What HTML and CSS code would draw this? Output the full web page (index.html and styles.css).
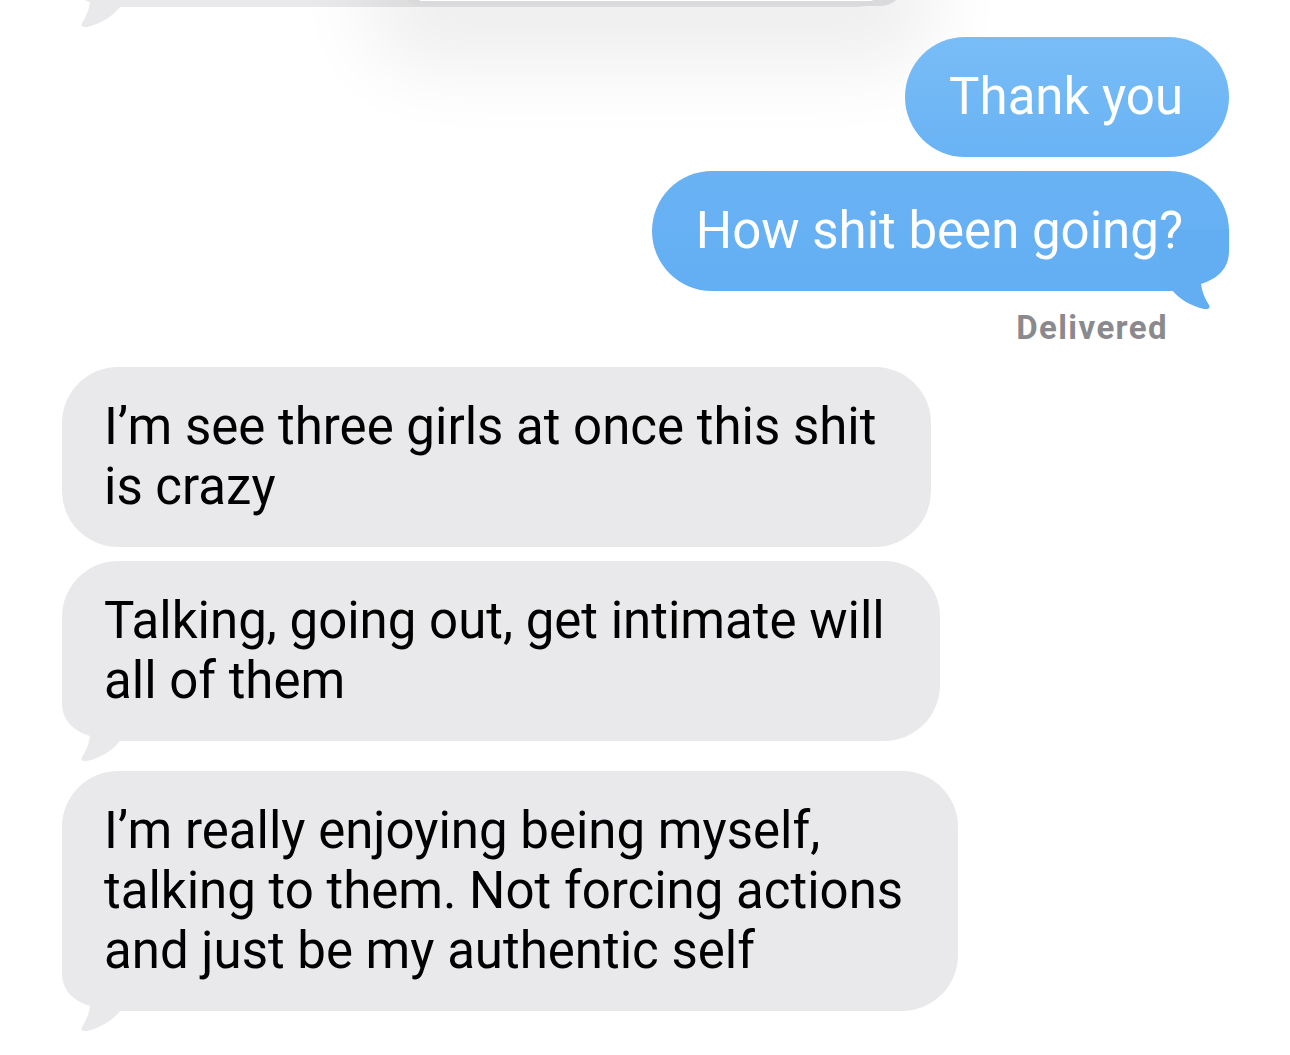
FILE: index.html
```html
<!DOCTYPE html>
<html lang="en">
<head>
<meta charset="utf-8">
<title>Messages</title>
<link rel="stylesheet" href="styles.css">
</head>
<body>
<main class="thread">
  <div class="bubble in peek-bubble">
    <svg class="tail tail-in" viewBox="0 0 70 80" aria-hidden="true"><path d="M0,0 L0,22 C0,40 12,50 28,55 C27,63 24,70 20,76 C18,79 21,81 25,80 C38,77 50,70 58,60 L70,60 L70,0 Z"/></svg>
    <div class="peek-card"><div class="peek-card-inner"></div></div>
  </div>

  <div class="bubble out first-out">Thank you</div>
  <div class="bubble out gap-s">How shit been going?
    <svg class="tail tail-out" viewBox="0 0 70 80" aria-hidden="true"><path d="M0,0 L0,22 C0,40 12,50 28,55 C27,63 24,70 20,76 C18,79 21,81 25,80 C38,77 50,70 58,60 L70,60 L70,0 Z"/></svg>
  </div>
  <div class="status">Delivered</div>

  <div class="bubble in">I’m see three girls at once this shit<br>is crazy</div>
  <div class="bubble in gap-s">Talking, going out, get intimate will<br>all of them
    <svg class="tail tail-in" viewBox="0 0 70 80" aria-hidden="true"><path d="M0,0 L0,22 C0,40 12,50 28,55 C27,63 24,70 20,76 C18,79 21,81 25,80 C38,77 50,70 58,60 L70,60 L70,0 Z"/></svg>
  </div>
  <div class="bubble in gap-l">I’m really enjoying being myself,<br>talking to them. Not forcing actions<br>and just be my authentic self
    <svg class="tail tail-in" viewBox="0 0 70 80" aria-hidden="true"><path d="M0,0 L0,22 C0,40 12,50 28,55 C27,63 24,70 20,76 C18,79 21,81 25,80 C38,77 50,70 58,60 L70,60 L70,0 Z"/></svg>
  </div>
</main>
</body>
</html>
```

FILE: styles.css
```css
html, body {
  margin: 0;
  padding: 0;
  background: #ffffff;
}

body {
  width: 1290px;
  height: 1055px;
  overflow: hidden;
  font-family: Roboto, "Liberation Sans", Arial, sans-serif;
}

.thread {
  display: flex;
  flex-direction: column;
  padding: 0 61px 0 62px;
}

/* message bubbles; each one is its own stacking context so the tail
   sits between the bubble fill and the text */
.bubble {
  position: relative;
  z-index: 0;
  box-sizing: border-box;
  border-radius: 56px;
  font-size: 51px;
  line-height: 60px;
  white-space: nowrap;
}

.bubble.in {
  align-self: flex-start;
  background: #e9e9eb;
  color: #000000;
  padding: 30px 55px 30px 42px;
}

.bubble.out {
  align-self: flex-end;
  color: #ffffff;
  background: linear-gradient(to bottom, #7dc0f7 0px, #6ab3f4 150px, #62adf3 320px);
  background-attachment: fixed;
  padding: 30px 46px 30px 44px;
  border-radius: 60px;
}

.first-out { margin-top: 30px; }
.gap-s { margin-top: 14px; }
.gap-l { margin-top: 30px; }

/* bubble tails */
.tail {
  position: absolute;
  z-index: -1;
  width: 70px;
  height: 80px;
  bottom: -20px;
}

.tail-in {
  left: 0;
  fill: #e9e9eb;
}

.tail-out {
  right: 0;
  bottom: -18px;
  fill: #63aef3;
  transform: scaleX(-1);
}

/* delivery status */
.status {
  align-self: flex-end;
  margin: 17px 61px 19px 0;
  font-size: 33px;
  line-height: 40px;
  font-weight: 700;
  letter-spacing: 1.4px;
  color: #8a8a8e;
}

/* partially scrolled-off bubble with a raised card over it */
.bubble.peek-bubble {
  width: 848px;
  height: 120px;
  margin-top: -113px;
  padding: 0 7px 1px 338px;
  display: flex;
  align-items: flex-end;
}

.peek-card {
  flex: 1;
  height: 60px;
  display: flex;
  box-sizing: border-box;
  padding: 0 27px 5px 16px;
  background: #dadadc;
  border-radius: 0 0 22px 22px;
  box-shadow: 0 30px 80px 30px rgba(0, 0, 0, 0.07);
}

.peek-card-inner {
  flex: 1;
  background: #ffffff;
  border-radius: 0 0 6px 6px;
}
```
